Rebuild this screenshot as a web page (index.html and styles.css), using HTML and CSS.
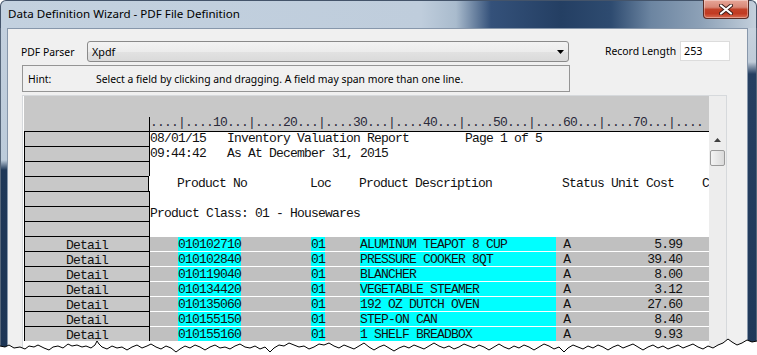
FILE: index.html
```html
<!DOCTYPE html>
<html lang="en">
<head>
    <meta charset="UTF-8">
    <title>Data Definition Wizard - PDF File Definition</title>
    <link rel="stylesheet" href="styles.css">
</head>
<body>

<div class="window">
    <div class="titlebar">
        <span class="title">Data Definition Wizard - PDF File Definition</span>
        <div class="close">
            <svg width="14" height="11" viewBox="0 0 14 11">
                <path d="M2 1.5 L12 9.5 M12 1.5 L2 9.5" stroke="#3b1d19" stroke-width="4" stroke-linecap="round"/>
                <path d="M2 1.5 L12 9.5 M12 1.5 L2 9.5" stroke="#ffffff" stroke-width="2.2" stroke-linecap="round"/>
            </svg>
        </div>
    </div>

    <div class="frame">
        <div class="edge-left"></div>
        <div class="client">
            <div class="top-row">
                <div class="left-col">
                    <div class="parser-row">
                        <span class="label">PDF Parser</span>
                        <div class="combo">
                            <span>Xpdf</span>
                            <svg class="drop" width="7" height="4" viewBox="0 0 7 4"><path d="M0 0 H7 L3.5 4 Z" fill="#000"/></svg>
                        </div>
                    </div>
                    <div class="hint">
                        <span class="hint-label">Hint:</span>
                        <span>Select a field by clicking and dragging. A field may span more than one line.</span>
                    </div>
                </div>
                <div class="record">
                    <span class="label">Record Length</span>
                    <div class="input">253</div>
                </div>
            </div>

            <div class="panel">
                <div class="grid">
                    <div class="head">
                        <div class="corner"></div>
                        <div class="ruler">....|....10...|....20...|....30...|....40...|....50...|....60...|....70...|....</div>
                    </div>
                    <div class="row"><div class="lbl"></div><div class="txt first">08/01/15   Inventory Valuation Report        Page 1 of 5</div></div>
                    <div class="row"><div class="lbl"></div><div class="txt">09:44:42   As At December 31, 2015</div></div>
                    <div class="row"><div class="lbl"></div><div class="txt"></div></div>
                    <div class="row"><div class="lbl"></div><div class="txt">    Product No         Loc    Product Description          Status Unit Cost    C</div></div>
                    <div class="row"><div class="lbl"></div><div class="txt"></div></div>
                    <div class="row"><div class="lbl"></div><div class="txt">Product Class: 01 - Housewares</div></div>
                    <div class="row"><div class="lbl"></div><div class="txt"></div></div>
                    <div class="row data"><div class="lbl">Detail</div><div class="txt">    <span class="hl">010102710</span>          <span class="hl">01</span>     <span class="hl">ALUMINUM TEAPOT 8 CUP       </span> A            5.99</div></div>
                    <div class="row data"><div class="lbl">Detail</div><div class="txt">    <span class="hl">010102840</span>          <span class="hl">01</span>     <span class="hl">PRESSURE COOKER 8QT         </span> A           39.40</div></div>
                    <div class="row data"><div class="lbl">Detail</div><div class="txt">    <span class="hl">010119040</span>          <span class="hl">01</span>     <span class="hl">BLANCHER                    </span> A            8.00</div></div>
                    <div class="row data"><div class="lbl">Detail</div><div class="txt">    <span class="hl">010134420</span>          <span class="hl">01</span>     <span class="hl">VEGETABLE STEAMER           </span> A            3.12</div></div>
                    <div class="row data"><div class="lbl">Detail</div><div class="txt">    <span class="hl">010135060</span>          <span class="hl">01</span>     <span class="hl">192 OZ DUTCH OVEN           </span> A           27.60</div></div>
                    <div class="row data"><div class="lbl">Detail</div><div class="txt">    <span class="hl">010155150</span>          <span class="hl">01</span>     <span class="hl">STEP-ON CAN                 </span> A            8.40</div></div>
                    <div class="row data"><div class="lbl">Detail</div><div class="txt">    <span class="hl">010155160</span>          <span class="hl">01</span>     <span class="hl">1 SHELF BREADBOX            </span> A            9.93</div></div>
                </div>
                <div class="scroll">
                    <div class="up">
                        <svg width="7" height="4" viewBox="0 0 7 4"><path d="M3.5 0 L7 4 H0 Z" fill="#404040"/></svg>
                    </div>
                    <div class="thumb"></div>
                </div>
            </div>
        </div>
        <div class="edge-right"></div>
    </div>

    <!-- torn bottom edge of the screenshot -->
    <svg class="tear" width="757" height="20" viewBox="0 335 757 20">
        <path fill="#ffffff" d="M0 355 L0 346 L5 347 L9 345 L14 348 L20 347 L25 349 L29 346 L34 347 L38 345 L44 348 L49 350 L53 347 L58 346 L63 348 L68 344 L72 346 L77 345 L82 347 L86 346 L91 348 L95 345 L97 341 L99 344 L102 347 L107 349 L112 346 L117 348 L122 347 L127 350 L132 347 L137 345 L142 348 L147 346 L151 344 L156 347 L161 349 L166 346 L171 348 L176 352 L180 349 L185 346 L190 348 L195 345 L200 347 L205 350 L210 347 L215 345 L220 348 L225 347 L230 349 L235 346 L240 344 L245 347 L250 348 L255 346 L260 349 L265 347 L270 352 L274 348 L279 345 L284 346 L289 343 L294 345 L299 347 L304 346 L309 349 L314 347 L319 344 L324 345 L329 343 L334 346 L339 348 L344 345 L349 347 L354 349 L359 346 L364 343 L369 347 L374 350 L379 347 L384 345 L389 348 L394 351 L399 348 L404 346 L409 348 L414 345 L419 347 L424 349 L429 346 L434 343 L439 346 L444 348 L449 346 L454 349 L459 347 L464 344 L469 346 L474 348 L479 345 L484 347 L489 350 L494 347 L499 344 L504 347 L509 349 L514 346 L519 348 L524 345 L529 347 L534 350 L539 347 L544 344 L549 346 L554 349 L559 347 L564 352 L568 348 L573 345 L578 347 L583 349 L588 346 L593 348 L598 345 L603 347 L608 350 L613 347 L618 345 L623 348 L628 346 L633 344 L638 347 L643 350 L648 347 L653 345 L658 348 L663 346 L668 349 L673 347 L678 345 L683 348 L688 346 L693 344 L698 347 L703 349 L708 346 L713 348 L718 345 L723 343 L728 339 L732 342 L737 345 L742 343 L747 340 L752 342 L757 341 L757 355 Z"/>
        <polyline fill="none" stroke="#000" stroke-width="1" points="0,346 5,347 9,345 14,348 20,347 25,349 29,346 34,347 38,345 44,348 49,350 53,347 58,346 63,348 68,344 72,346 77,345 82,347 86,346 91,348 95,345 97,341 99,344 102,347 107,349 112,346 117,348 122,347 127,350 132,347 137,345 142,348 147,346 151,344 156,347 161,349 166,346 171,348 176,352 180,349 185,346 190,348 195,345 200,347 205,350 210,347 215,345 220,348 225,347 230,349 235,346 240,344 245,347 250,348 255,346 260,349 265,347 270,352 274,348 279,345 284,346 289,343 294,345 299,347 304,346 309,349 314,347 319,344 324,345 329,343 334,346 339,348 344,345 349,347 354,349 359,346 364,343 369,347 374,350 379,347 384,345 389,348 394,351 399,348 404,346 409,348 414,345 419,347 424,349 429,346 434,343 439,346 444,348 449,346 454,349 459,347 464,344 469,346 474,348 479,345 484,347 489,350 494,347 499,344 504,347 509,349 514,346 519,348 524,345 529,347 534,350 539,347 544,344 549,346 554,349 559,347 564,352 568,348 573,345 578,347 583,349 588,346 593,348 598,345 603,347 608,350 613,347 618,345 623,348 628,346 633,344 638,347 643,350 648,347 653,345 658,348 663,346 668,349 673,347 678,345 683,348 688,346 693,344 698,347 703,349 708,346 713,348 718,345 723,343 728,339 732,342 737,345 742,343 747,340 752,342 757,341"/>
    </svg>
</div>

</body>
</html>
```

FILE: styles.css
```css
* {
    box-sizing: border-box;
}
body {
    margin: 0;
    background-color: #ffffff;
    font-family: "Noto Sans", "Open Sans", sans-serif;
    font-size: 10.4px;
    color: #000000;
}
.window {
    position: relative;
    width: 757px;
    height: 355px;
    overflow: hidden;
}

/* title bar */
.titlebar {
    height: 28px;
    display: flex;
    align-items: flex-start;
    border: 1px solid #44546a;
    border-bottom: 0;
    border-radius: 6px 6px 0 0;
    background: linear-gradient(90deg, #c3d1df 0, #bfcddc 420px, #a9bbcd 455px, #34517a 490px, #243f63 560px, #2e4b70 610px, #6c85a1 650px, #8da1b7 700px, #b9c7d5 745px, #c7d2de 757px);
}
.title {
    padding: 5px 0 0 7px;
    line-height: 16px;
    font-size: 11.6px;
}
.close {
    margin: -1px 7px 0 auto;
    width: 46px;
    height: 19px;
    display: flex;
    justify-content: center;
    align-items: center;
    border: 1px solid #5a2b24;
    border-top: 0;
    border-radius: 0 0 4px 4px;
    background: linear-gradient(#e7a698 0%, #d88877 40%, #c24229 52%, #c13a22 75%, #d86c52 100%);
    box-shadow: inset 0 0 0 1px rgba(255, 255, 255, 0.35);
}

/* window frame */
.frame {
    display: flex;
    height: 327px;
}
.edge-left {
    width: 7px;
    border-left: 1px solid #56667a;
    background: linear-gradient(#c3d0de 0, #bccbda 132px, #1f3858 142px, #1d3555 100%);
}
.edge-right {
    width: 9px;
    border-right: 1px solid #56667a;
    background: linear-gradient(#c7d2de 0, #bfcbd8 34px, #263f61 46px, #1f3859 100%);
}
.client {
    flex: 1;
    background-color: #f0f0f0;
    border: 1px solid #8797ab;
    border-bottom: 0;
    padding: 12px 0 0 14px;
}

/* parser, hint and record length */
.top-row {
    display: flex;
}
.left-col {
    width: 548px;
}
.parser-row {
    display: flex;
    align-items: center;
    height: 21px;
}
.parser-row .label {
    width: 66px;
    margin-left: -1px;
    white-space: nowrap;
}
.combo {
    width: 482px;
    height: 21px;
    display: flex;
    align-items: center;
    justify-content: space-between;
    padding: 0 4px 0 4px;
    border: 1px solid #8a8a8a;
    border-radius: 3px;
    font-size: 10.8px;
    background: linear-gradient(#f3f3f3 0%, #ececec 50%, #e2e2e2 52%, #dadada 100%);
}
.hint {
    margin-top: 3px;
    height: 27px;
    display: flex;
    align-items: center;
    padding-left: 5px;
    border: 1px solid #959595;
    white-space: nowrap;
}
.hint-label {
    width: 68px;
}
.record {
    margin-left: 35px;
    height: 20px;
    display: flex;
    align-items: center;
}
.record .label {
    width: 75px;
    white-space: nowrap;
}
.input {
    width: 50px;
    height: 20px;
    padding-left: 3px;
    line-height: 18px;
    font-size: 10.8px;
    background-color: #ffffff;
    border: 1px solid #dcdcdc;
}

/* field grid */
.panel {
    margin-top: 3px;
    width: 705px;
    height: 300px;
    display: flex;
    padding-left: 1px;
    background-color: #ffffff;
    border: 1px solid #d6d9dc;
    border-bottom: 0;
}
.grid {
    width: 685px;
    font-family: "Liberation Mono", monospace;
    font-size: 13px;
    letter-spacing: -0.8px;
    color: #111111;
}
.head {
    height: 35px;
    display: flex;
    align-items: flex-end;
    background-color: #c8c8c8;
}
.corner {
    width: 125px;
}
.ruler {
    flex: 1;
    height: 14px;
    line-height: 11px;
    border-left: 1px solid #000000;
    white-space: pre;
    color: #2a2a3a;
}
.row {
    display: flex;
    height: 15px;
}
.lbl {
    width: 126px;
    height: 15px;
    border: 1px solid #000000;
    border-bottom: 0;
    background-color: #c8c8c8;
    text-align: center;
    line-height: 14px;
    padding-top: 2px;
}
.txt {
    flex: 1;
    height: 15px;
    border-top: 1px solid #ffffff;
    line-height: 14px;
    white-space: pre;
}
.txt.first {
    border-top-color: #000000;
}
.data .txt {
    padding-top: 2px;
    line-height: 12px;
    background-color: #c0c0c0;
}
.hl {
    display: inline-block;
    vertical-align: baseline;
    height: 14px;
    margin-top: -2px;
    padding-top: 2px;
    line-height: 12px;
    background-color: #00ffff;
}

/* scrollbar */
.scroll {
    width: 17px;
    padding-top: 35px;
    background-color: #ededed;
}
.up {
    height: 19px;
    display: flex;
    justify-content: center;
    align-items: center;
    padding-bottom: 1px;
}
.thumb {
    margin: 0 1px;
    height: 16px;
    border: 1px solid #9a9a9a;
    border-radius: 2px;
    background: linear-gradient(90deg, #f4f4f4, #dadada);
}

.tear {
    position: absolute;
    left: 0;
    bottom: 0;
}
```
